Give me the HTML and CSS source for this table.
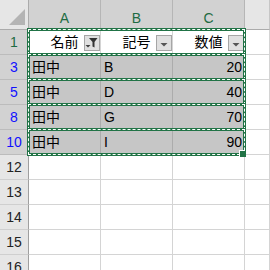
FILE: index.html
```html
<!DOCTYPE html>
<html lang="ja">
<head>
<meta charset="utf-8">
<title>Sheet1</title>
<link rel="stylesheet" href="styles.css">
</head>
<body>
<div class="sheet">
  <div class="grid">
    <div class="corner"><svg width="29" height="29" viewBox="0 0 29 29"><polygon points="25,9 25,25 9,25" fill="#b4b4b4"/></svg></div>
    <div class="ch sel">A</div>
    <div class="ch sel">B</div>
    <div class="ch sel">C</div>
    <div class="ch"></div>

    <div class="rh sel head-row">1</div>
    <div class="cell title">名前<span class="filter"><svg width="14" height="14" viewBox="0 0 14 14"><polygon points="0.5,9 5.5,9 3,11.5" fill="#404040"/><polygon points="4,2 12.5,2 9.5,6 9.5,11.5 7.5,10.5 7.5,6" fill="#333"/></svg></span></div>
    <div class="cell title">記号<span class="filter"><svg width="14" height="14" viewBox="0 0 14 14"><polygon points="3.5,7 10.5,7 7,10.5" fill="#555"/></svg></span></div>
    <div class="cell title">数値<span class="filter"><svg width="14" height="14" viewBox="0 0 14 14"><polygon points="3.5,7 10.5,7 7,10.5" fill="#555"/></svg></span></div>
    <div class="cell"></div>

    <div class="rh sel filtered">3</div>
    <div class="cell on">田中</div><div class="cell on">B</div><div class="cell on num">20</div><div class="cell"></div>

    <div class="rh sel filtered">5</div>
    <div class="cell on">田中</div><div class="cell on">D</div><div class="cell on num">40</div><div class="cell"></div>

    <div class="rh sel filtered">8</div>
    <div class="cell on">田中</div><div class="cell on">G</div><div class="cell on num">70</div><div class="cell"></div>

    <div class="rh sel filtered">10</div>
    <div class="cell on">田中</div><div class="cell on">I</div><div class="cell on num">90</div><div class="cell"></div>

    <div class="rh">12</div><div class="cell"></div><div class="cell"></div><div class="cell"></div><div class="cell"></div>
    <div class="rh">13</div><div class="cell"></div><div class="cell"></div><div class="cell"></div><div class="cell"></div>
    <div class="rh">14</div><div class="cell"></div><div class="cell"></div><div class="cell"></div><div class="cell"></div>
    <div class="rh">15</div><div class="cell"></div><div class="cell"></div><div class="cell"></div><div class="cell"></div>
    <div class="rh">16</div><div class="cell"></div><div class="cell"></div><div class="cell"></div><div class="cell"></div>
  </div>

  <!-- copy marquee around each visible row of A1:C10 -->
  <div class="marquee">
    <div class="ants"></div>
    <div class="ants"></div>
    <div class="ants"></div>
    <div class="ants"></div>
    <div class="ants"><span class="handle"></span></div>
  </div>
</div>
</body>
</html>
```

FILE: styles.css
```css
* { box-sizing: border-box; }

html, body {
  margin: 0;
  padding: 0;
  width: 270px;
  height: 270px;
  overflow: hidden;
  background: #fff;
}

.sheet {
  position: relative;
  width: 270px;
  height: 270px;
  overflow: hidden;
  font-family: "Liberation Sans", "Noto Sans CJK JP", sans-serif;
  font-size: 14px;
  color: #000;
}

.grid {
  display: grid;
  grid-template-columns: 29px 72px 72px 72px 1fr;
  grid-template-rows: 30px repeat(10, 25px);
}

/* top-left select-all box */
.corner {
  background: #e6e6e6;
  border-right: 1px solid #ababab;
  border-bottom: 1px solid #ababab;
}
.corner svg { display: block; }

/* column headers */
.ch {
  background: #e6e6e6;
  border-right: 1px solid #c6c6c6;
  border-bottom: 1px solid #ababab;
  text-align: center;
  line-height: 16px;
  padding-top: 10px;
  color: #444;
}
.ch.sel {
  background: #d2d2d2;
  color: #1e6b43;
  border-right-color: #b6b6b6;
}

/* row headers */
.rh {
  background: #e6e6e6;
  border-right: 1px solid #9f9f9f;
  border-bottom: 1px solid #cfcfcf;
  display: flex;
  align-items: center;
  justify-content: center;
  line-height: 16px;
  color: #222;
}
.rh.sel {
  background: #d2d2d2;
  border-bottom-color: #bcbcbc;
}
.rh.head-row { color: #1e6b43; }
.rh.filtered { color: #1010ff; }

/* worksheet cells */
.cell {
  position: relative;
  border-right: 1px solid #d4d4d4;
  border-bottom: 1px solid #d4d4d4;
  display: flex;
  align-items: center;
  padding: 0 3px;
  line-height: 16px;
  white-space: nowrap;
}
.cell.on {
  background: #c6c6c6;
  border-right-color: #acacac;
  border-bottom-color: #acacac;
}
.cell.num {
  justify-content: flex-end;
  padding-right: 2px;
}
.cell.title {
  justify-content: center;
}

/* autofilter dropdown button */
.filter {
  position: absolute;
  right: 0;
  top: 5px;
  width: 16px;
  height: 16px;
  border: 1px solid #a6a6a6;
  background: #e0e0e0;
}
.filter svg { display: block; }

/* marching-ants copy border */
.marquee {
  position: absolute;
  left: 27px;
  top: 28px;
  width: 219px;
  display: flex;
  flex-direction: column;
}
.ants {
  position: relative;
  height: 28px;
  border: 3px solid #217346;
}
.ants + .ants { margin-top: -3px; }
.ants::before {
  content: "";
  position: absolute;
  top: -2px;
  left: -2px;
  right: -2px;
  bottom: -2px;
  border: 1px dashed #fff;
}
.handle {
  position: absolute;
  right: -3px;
  bottom: -4px;
  width: 6px;
  height: 6px;
  background: #217346;
  box-shadow: -1px -1px 0 #fff;
}
```
